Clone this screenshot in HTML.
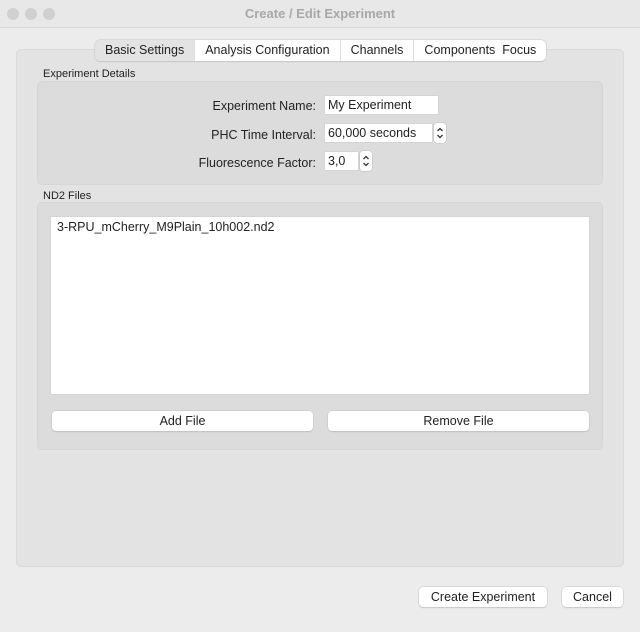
<!DOCTYPE html>
<html><head><meta charset="utf-8"><style>
*{box-sizing:border-box;margin:0;padding:0}
body{width:640px;height:632px;background:#ececec;font-family:"Liberation Sans",sans-serif;font-size:12.5px;color:#222;position:relative;overflow:hidden}
.a{position:absolute}
.title{left:0;top:0;width:640px;height:28px;border-bottom:1px solid #d6d6d6;background:#e8e8e8;text-align:center;line-height:28px;font-weight:bold;color:#a8a8a8;font-size:13px}
.dot{width:12px;height:12px;border-radius:50%;background:#d0d0d0;top:8px}
.pane{left:16px;top:49px;width:608px;height:518px;background:#e3e3e3;border:1px solid #dadada;border-radius:5px}
.tabs{left:95px;top:40px;height:21px;display:flex;background:#fff;border-radius:5px;box-shadow:0 0 0 0.5px #c8c8c8,0 1px 1px rgba(0,0,0,.15);font-size:12.5px;line-height:21px}
.tabs div{padding:0 10px;border-left:1px solid #ddd}
.tabs div:first-child{border:none;background:#e3e3e3;border-radius:5px 0 0 5px}
.grp{background:#dcdcdc;border-radius:5px;border:1px solid #d6d6d6}
.lbl{font-size:11px;color:#222}
.in{background:#fff;height:18px;line-height:19px;padding-left:3px;box-shadow:0 0 0 0.5px #ccc}
.r{text-align:right;width:200px;left:116px}
.spin{width:12px;height:20px;background:#fff;border-radius:3px;box-shadow:0 0 0 0.5px #bbb}
.btn{background:#fff;border-radius:4px;height:20px;line-height:20px;text-align:center;box-shadow:0 0 0 0.5px #c4c4c4,0 1px 1px rgba(0,0,0,.15)}
</style></head><body>
<div class="a title">Create / Edit Experiment</div>
<div class="a dot" style="left:7px"></div><div class="a dot" style="left:25px"></div><div class="a dot" style="left:43px"></div>
<div class="a pane"></div>
<div class="a tabs"><div>Basic Settings</div><div>Analysis Configuration</div><div>Channels</div><div>Components&nbsp; Focus</div></div>
<div class="a lbl" style="left:43px;top:68px">Experiment Details</div>
<div class="a grp" style="left:37px;top:81px;width:566px;height:104px"></div>
<div class="a r" style="top:99px">Experiment Name:</div>
<div class="a in" style="left:325px;top:96px;width:113px">My Experiment</div>
<div class="a r" style="top:128px">PHC Time Interval:</div>
<div class="a in" style="left:325px;top:124px;width:107px">60,000 seconds</div>
<div class="a spin" style="left:434px;top:123px"><svg width="12" height="20"><path d="M3.5 8L6 5.5 8.5 8M3.5 12L6 14.5 8.5 12" fill="none" stroke="#333" stroke-width="1.3"/></svg></div>
<div class="a r" style="top:156px">Fluorescence Factor:</div>
<div class="a in" style="left:325px;top:152px;width:33px">3,0</div>
<div class="a spin" style="left:360px;top:151px"><svg width="12" height="20"><path d="M3.5 8L6 5.5 8.5 8M3.5 12L6 14.5 8.5 12" fill="none" stroke="#333" stroke-width="1.3"/></svg></div>
<div class="a lbl" style="left:43px;top:190px">ND2 Files</div>
<div class="a grp" style="left:37px;top:202px;width:566px;height:248px"></div>
<div class="a" style="left:51px;top:217px;width:538px;height:177px;background:#fff;box-shadow:0 0 0 0.5px #ccc;padding:3px 6px">3-RPU_mCherry_M9Plain_10h002.nd2</div>
<div class="a btn" style="left:52px;top:411px;width:261px">Add File</div>
<div class="a btn" style="left:328px;top:411px;width:261px">Remove File</div>
<div class="a btn" style="left:419px;top:587px;width:128px">Create Experiment</div>
<div class="a btn" style="left:562px;top:587px;width:61px">Cancel</div>
</body></html>
